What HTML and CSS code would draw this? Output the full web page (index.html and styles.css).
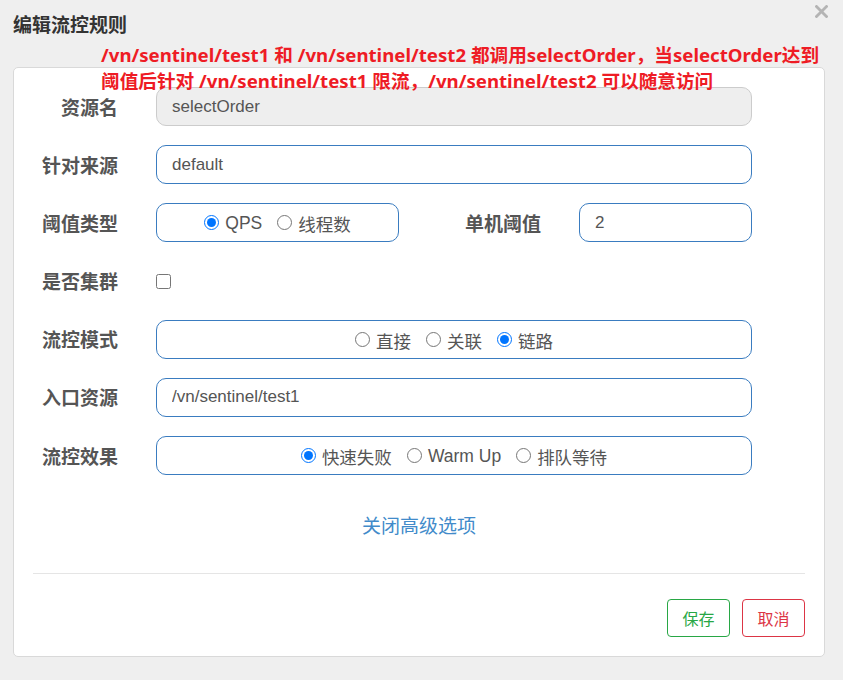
FILE: index.html
```html
<!DOCTYPE html>
<html lang="zh-CN">
<head>
    <meta charset="UTF-8">
    <meta name="viewport" content="width=device-width, initial-scale=1.0">
    <title>编辑流控规则</title>
    <link rel="stylesheet" href="styles.css">
</head>
<body>
    <div class="modal">
        <!-- Header -->
        <div class="modal-header">
            <h4 class="modal-title">编辑流控规则</h4>
            <button class="close" type="button" title="关闭">
                <svg width="13" height="13" viewBox="0 0 13 13">
                    <path d="M1.5 1.5 L11.5 11.5 M11.5 1.5 L1.5 11.5" stroke="#b4b4b4" stroke-width="2.8" stroke-linecap="square"/>
                </svg>
            </button>
        </div>

        <!-- Red note pasted over the dialog -->
        <div class="note">/vn/sentinel/test1 和 /vn/sentinel/test2 都调用selectOrder，当selectOrder达到<br>阈值后针对 /vn/sentinel/test1 限流，/vn/sentinel/test2 可以随意访问</div>

        <div class="card">
            <form class="form">
                <div class="row">
                    <label class="ctl-label">资源名</label>
                    <input class="field" type="text" value="selectOrder" disabled>
                </div>
                <div class="row">
                    <label class="ctl-label">针对来源</label>
                    <input class="field" type="text" value="default">
                </div>
                <div class="row">
                    <label class="ctl-label">阈值类型</label>
                    <div class="field choice short">
                        <label class="opt"><input type="radio" name="grade" checked><span>QPS</span></label>
                        <label class="opt"><input type="radio" name="grade"><span>线程数</span></label>
                    </div>
                    <label class="ctl-label wide">单机阈值</label>
                    <input class="field small" type="text" value="2">
                </div>
                <div class="row">
                    <label class="ctl-label">是否集群</label>
                    <input class="check" type="checkbox">
                </div>
                <div class="row">
                    <label class="ctl-label">流控模式</label>
                    <div class="field choice">
                        <label class="opt"><input type="radio" name="strategy"><span>直接</span></label>
                        <label class="opt"><input type="radio" name="strategy"><span>关联</span></label>
                        <label class="opt"><input type="radio" name="strategy" checked><span>链路</span></label>
                    </div>
                </div>
                <div class="row">
                    <label class="ctl-label">入口资源</label>
                    <input class="field" type="text" value="/vn/sentinel/test1">
                </div>
                <div class="row">
                    <label class="ctl-label">流控效果</label>
                    <div class="field choice">
                        <label class="opt"><input type="radio" name="behavior" checked><span>快速失败</span></label>
                        <label class="opt"><input type="radio" name="behavior"><span>Warm Up</span></label>
                        <label class="opt"><input type="radio" name="behavior"><span>排队等待</span></label>
                    </div>
                </div>

                <div class="more"><a href="#">关闭高级选项</a></div>
            </form>

            <div class="footer">
                <button class="btn btn-save" type="button">保存</button>
                <button class="btn btn-cancel" type="button">取消</button>
            </div>
        </div>
    </div>
</body>
</html>
```

FILE: styles.css
```css
body {
    margin: 0;
    padding: 0;
    background-color: #efefef;
    font-family: "Noto Sans", "Noto Sans CJK SC", sans-serif;
}
.modal {
    position: relative;
    width: 843px;
    height: 680px;
}
.modal-header {
    display: flex;
    justify-content: space-between;
    align-items: flex-start;
    height: 67px;
    padding: 0 15px 0 13px;
    box-sizing: border-box;
}
.modal-title {
    margin: 12px 0 0;
    font-size: 19px;
    line-height: 27px;
    font-weight: bold;
    color: #333;
}
.close {
    margin-top: 5px;
    padding: 0;
    border: none;
    background: none;
    cursor: pointer;
    line-height: 0;
}
.note {
    position: absolute;
    left: 101px;
    top: 42px;
    z-index: 2;
    font-size: 18.65px;
    line-height: 26px;
    font-weight: bold;
    color: #ee1c25;
    white-space: nowrap;
}
.card {
    margin: 0 18px 0 13px;
    background-color: #fff;
    border: 1px solid #d9d9d9;
    border-radius: 5px;
}
.form {
    padding: 19px 0 33px;
}
.row {
    display: flex;
    align-items: center;
    height: 39px;
    margin-bottom: 19.2px;
}
.ctl-label {
    width: 104px;
    margin-right: 38px;
    text-align: right;
    font-size: 19px;
    font-weight: bold;
    color: #555;
}
.ctl-label.wide {
    width: 142px;
}
.field {
    width: 596px;
    height: 39px;
    box-sizing: border-box;
    padding: 0 15px;
    border: 1px solid #3a7cc0;
    border-radius: 10px;
    background-color: #fff;
    font-family: "Liberation Sans", "Noto Sans CJK SC", sans-serif;
    font-size: 17px;
    color: #555;
    outline: none;
}
.field:disabled {
    background-color: #eee;
    border-color: #ccc;
}
.field.short {
    width: 243px;
}
.field.small {
    width: 173px;
}
.choice {
    display: flex;
    justify-content: center;
    align-items: center;
    gap: 15px;
}
.opt {
    display: flex;
    align-items: center;
    gap: 6px;
    font-size: 17.5px;
    cursor: pointer;
}
.opt span {
    padding-top: 2px;
}
.opt input[type="radio"] {
    width: 15px;
    height: 15px;
    margin: 0;
}
.check {
    width: 15px;
    height: 15px;
    margin: 0;
}
.more {
    padding-top: 19px;
    text-align: center;
    font-size: 19px;
    line-height: 27px;
}
.more a {
    color: #428bca;
    text-decoration: none;
}
.footer {
    display: flex;
    justify-content: flex-end;
    gap: 12px;
    margin: 0 19px;
    padding: 25px 0 19px;
    border-top: 1px solid #e5e5e5;
}
.btn {
    width: 63px;
    height: 38px;
    padding: 0;
    background-color: #fff;
    border: 1px solid;
    border-radius: 4px;
    font-family: "Noto Sans CJK SC", sans-serif;
    font-size: 16px;
    cursor: pointer;
}
.btn-save {
    color: #28a745;
    border-color: #28a745;
}
.btn-cancel {
    color: #dc3545;
    border-color: #dc3545;
}
```
